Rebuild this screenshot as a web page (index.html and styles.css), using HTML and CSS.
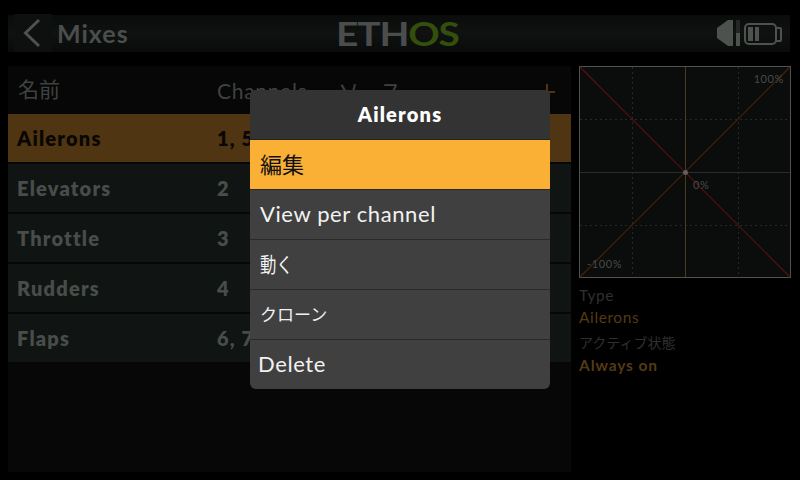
FILE: index.html
```html
<!DOCTYPE html>
<html lang="ja">
<head>
    <meta charset="UTF-8">
    <meta name="viewport" content="width=device-width, initial-scale=1.0">
    <title>Mixes</title>
    <link rel="stylesheet" href="styles.css">
</head>
<body>
<div class="screen">
    <header class="topbar">
        <div class="back">
            <svg width="38" height="38" viewBox="0 0 38 38"><path d="M25 6 L11.500 19 L25 32" fill="none" stroke="#4d524f" stroke-width="3"/></svg>
        </div>
        <div class="title">Mixes</div>
        <div class="logo"><span class="logo-text">ETH<span class="logo-os">OS</span></span></div>
        <div class="status">
            <svg width="72" height="38" viewBox="0 0 72 38">
                <path d="M3 14 L14 6 L19 6 L19 32 L14 32 L3 24 Z" fill="#4d524f"/>
                <rect x="22" y="6" width="4" height="13" fill="#232624"/>
                <rect x="22" y="19" width="4" height="13" fill="#4d524f"/>
                <rect x="31" y="10" width="31" height="20" rx="4" fill="none" stroke="#4d524f" stroke-width="2"/>
                <path d="M62 14 L66 14 Q67 14 67 15 L67 26 Q67 27 66 27 L62 27" fill="none" stroke="#4d524f" stroke-width="2"/>
                <rect x="34" y="13" width="5" height="14" fill="#4d524f"/>
                <rect x="41" y="13" width="4" height="14" fill="#4d524f"/>
            </svg>
        </div>
    </header>

    <main class="content">
        <section class="list">
            <div class="list-head">
                <span class="col-name">名前</span>
                <span class="col-ch">Channels</span>
                <span class="col-src">ソース</span>
                <svg class="add" width="18" height="18" viewBox="0 0 18 18"><path d="M9 1V17M1 9H17" stroke="#4f3512" stroke-width="2"/></svg>
            </div>
            <div class="row row-active"><span class="col-name">Ailerons</span><span class="col-ch">1, 5</span></div>
            <div class="row"><span class="col-name">Elevators</span><span class="col-ch">2</span></div>
            <div class="row"><span class="col-name">Throttle</span><span class="col-ch">3</span></div>
            <div class="row"><span class="col-name">Rudders</span><span class="col-ch">4</span></div>
            <div class="row"><span class="col-name">Flaps</span><span class="col-ch">6, 7</span></div>
        </section>

        <aside class="side">
            <div class="graph">
                <svg width="212" height="212" viewBox="0 0 212 212">
                    <rect x="0.500" y="0.500" width="211" height="211" fill="#0a0d0b" stroke="#505250"/>
                    <path d="M53.500 1V211M159.500 1V211M1 53.500H211M1 159.500H211" stroke="#262927" stroke-dasharray="2 3"/>
                    <path d="M1 106.500H211" stroke="#2a2d2b"/>
                    <path d="M106.500 1V211" stroke="#4d3a1a"/>
                    <path d="M1 211L211 1" stroke="#47200c" stroke-width="1.200"/>
                    <path d="M1 1L211 211" stroke="#561010" stroke-width="1.200"/>
                    <circle cx="106.500" cy="106.500" r="2.500" fill="#5e5f5e"/>
                </svg>
                <span class="graph-label lbl-top">100%</span>
                <span class="graph-label lbl-mid">0%</span>
                <span class="graph-label lbl-bot">-100%</span>
            </div>
            <div class="info">
                <div class="info-label">Type</div>
                <div class="info-value">Ailerons</div>
                <div class="info-label info-gap">アクティブ状態</div>
                <div class="info-value info-bold">Always on</div>
            </div>
        </aside>
    </main>

    <div class="overlay">
        <div class="menu">
            <div class="menu-title">Ailerons</div>
            <div class="menu-item menu-item-active">編集</div>
            <div class="menu-item">View per channel</div>
            <div class="menu-item"><span class="menu-narrow">動く</span></div>
            <div class="menu-item menu-item-small">クローン</div>
            <div class="menu-item menu-item-last">Delete</div>
        </div>
    </div>
</div>
</body>
</html>
```

FILE: styles.css
```css
* {
    box-sizing: border-box;
}
html, body {
    margin: 0;
    background: #000;
}
.screen {
    position: relative;
    width: 800px;
    height: 480px;
    overflow: hidden;
    background: #000;
    font-family: Lato, "Noto Sans CJK JP", sans-serif;
    padding-top: 14px;
}

/* top bar */
.topbar {
    display: flex;
    align-items: center;
    height: 38px;
    margin: 0 10px 0 8px;
    background: linear-gradient(#000 0 1px, #0a0c0b 1px, #0f1211 50%, #090b0a);
    position: relative;
}
.back {
    width: 38px;
    height: 38px;
    margin-left: 6px;
    background: #0d100e;
}
.title {
    margin-left: 5px;
    font-size: 25px;
    font-weight: 700;
    letter-spacing: 1px;
    color: #4a4e4c;
}
.logo {
    position: absolute;
    left: 328px;
    top: 0;
    width: 122px;
    height: 38px;
    line-height: 38px;
}
.logo-text {
    display: inline-block;
    font-size: 33px;
    font-weight: 700;
    letter-spacing: -1px;
    color: #4b4d4d;
    transform-origin: left center;
    transform: scaleX(1.18);
}
.logo-os {
    color: #334f0b;
}
.status {
    margin-left: auto;
    width: 72px;
    height: 38px;
    margin-right: 4px;
}

/* list */
.content {
    display: flex;
    margin: 14px 9px 0 8px;
    gap: 8px;
}
.list {
    width: 563px;
    height: 406px;
    background: #070707;
}
.list-head {
    display: flex;
    align-items: center;
    height: 48px;
    font-size: 21px;
    letter-spacing: 0.7px;
    color: #3f4240;
}
.list-head .col-name {
    margin-bottom: 4px;
    padding-left: 10px;
    letter-spacing: 0;
}
.row {
    display: flex;
    align-items: center;
    height: 48px;
    margin-bottom: 2px;
    background: #101412;
    font-size: 20px;
    font-weight: 800;
    letter-spacing: 1.200px;
    color: #484c4a;
}
.row-active {
    background: #4f3512;
    color: #0a0703;
}
.col-name {
    width: 209px;
    padding-left: 9px;
}
.col-ch {
    width: 121px;
}
.col-src {
    width: 200px;
}
.add {
    margin-top: 4px;
}

/* graph and details */
.side {
    width: 212px;
}
.graph {
    position: relative;
    width: 212px;
    height: 212px;
}
.graph svg {
    display: block;
}
.graph-label {
    position: absolute;
    font-size: 11px;
    letter-spacing: 0.6px;
    color: #484a48;
    line-height: 13px;
}
.lbl-top {
    top: 6px;
    right: 7px;
}
.lbl-mid {
    top: 112px;
    left: 114px;
}
.lbl-bot {
    top: 191px;
    left: 8px;
}
.info {
    padding-top: 6px;
    font-size: 15.500px;
    letter-spacing: 0.6px;
    line-height: 22px;
}
.info-label {
    color: #2f312f;
}
.info-value {
    color: #543a13;
}
.info-gap {
    margin-top: 4px;
    font-size: 14px;
    letter-spacing: 0;
}
.info-bold {
    font-weight: 700;
    letter-spacing: 0.9px;
}

/* popup menu */
.overlay {
    position: absolute;
    left: 250px;
    top: 90px;
}
.menu {
    width: 300px;
    height: 299px;
    border-radius: 6px;
    overflow: hidden;
    background: #404040;
}
.menu-title {
    height: 50px;
    background: #333;
    border-bottom: 1px solid #232323;
    font-size: 20px;
    font-weight: 800;
    letter-spacing: 1.200px;
    line-height: 49px;
    text-align: center;
    color: #fff;
}
.menu-item {
    height: 50px;
    padding-left: 10px;
    border-bottom: 1px solid #2a2a2a;
    font-size: 22px;
    letter-spacing: 0.6px;
    line-height: 48px;
    color: #f2f2f2;
}
.menu-item-active {
    background: #fab035;
    color: #111;
    letter-spacing: 0;
    line-height: 49px;
}
.menu-narrow {
    display: inline-block;
    font-size: 21px;
    letter-spacing: 0;
    transform-origin: left center;
    transform: scaleX(0.78);
}
.menu-item-small {
    font-size: 17px;
    letter-spacing: 0;
    line-height: 49px;
}
.menu-item-last {
    height: 49px;
    border-bottom: 0;
    padding-left: 8px;
}
```
